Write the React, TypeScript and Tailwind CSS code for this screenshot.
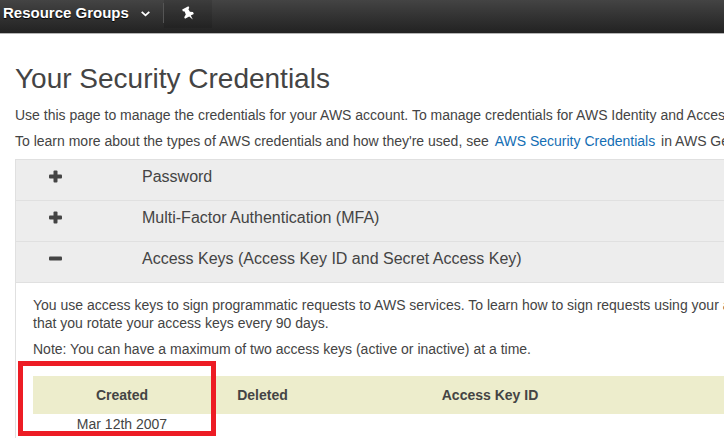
import React, { useState } from 'react';

const sections = [
  { id: 'password', title: 'Password' },
  { id: 'mfa', title: 'Multi-Factor Authentication (MFA)' },
  { id: 'access-keys', title: 'Access Keys (Access Key ID and Secret Access Key)' },
];

const accessKeys = [{ created: 'Mar 12th 2007', deleted: '', keyId: '' }];

const PinIcon = () => (
  <svg width="14" height="14" viewBox="0 0 14 14" fill="white" aria-hidden="true">
    <path d="M1.2 3.6 L7.4 0.2 L8.3 1.8 L7.4 3.2 L8.9 5.8 L12 6.1 L12.8 7.9 L9.8 9.5 L11.8 13.6 L8.2 10.5 L4 12.8 L3.2 11.2 L4.8 8.4 L3.6 5.5 L1.8 5.3 Z" />
  </svg>
);

const ToggleIcon = ({ open }: { open: boolean }) => (
  <svg width="13" height="13" viewBox="0 0 13 13" fill="#444444" aria-hidden="true">
    <rect x="0" y="4.5" width="13" height="4" rx="1" />
    {!open && <rect x="4.5" y="0.5" width="4" height="12" rx="1" />}
  </svg>
);

const NavBar = () => (
  <nav className="flex h-[34px] items-start border-b border-[#b5b5b5] bg-linear-to-b from-[#444444] to-[#222222] text-white">
    <button className="flex h-[26px] items-center gap-3 pl-[3px] pr-[13px] text-[15px] font-bold [text-shadow:0_1px_1px_#000]">
      Resource Groups
      <svg className="mt-0.5" width="9" height="6" viewBox="0 0 9 6" fill="none" stroke="white" strokeWidth="1.8" aria-hidden="true">
        <path d="M0.7 0.8 L4.5 4.3 L8.3 0.8" />
      </svg>
    </button>
    <span className="mt-[3px] h-5 w-px bg-[#555555]" />
    <button aria-label="Pin" className="flex h-7 w-12 items-center justify-center bg-black/10 pb-0.5">
      <PinIcon />
    </button>
  </nav>
);

const AccessKeysPanel = () => (
  <div className="pb-1 pl-[17px] pt-[13px]">
    <p className="leading-[18px]">
      You use access keys to sign programmatic requests to AWS services. To learn how to sign requests using your access
      <br />
      that you rotate your access keys every 90 days.
    </p>
    <p className="mt-2 leading-[18px]">
      Note: You can have a maximum of two access keys (active or inactive) at a time.
    </p>

    <div className="relative mt-[18px]">
      <table className="w-full table-fixed text-center">
        <thead>
          <tr className="h-[38px] bg-[#ededcc]">
            <th className="w-[178px]">Created</th>
            <th className="w-[103px]">Deleted</th>
            <th className="w-[352px]">Access Key ID</th>
            <th />
          </tr>
        </thead>
        <tbody>
          {accessKeys.map((key) => (
            <tr key={key.created}>
              <td>{key.created}</td>
              <td>{key.deleted}</td>
              <td>{key.keyId}</td>
              <td />
            </tr>
          ))}
        </tbody>
      </table>
      {/* Highlight around the creation date */}
      <div className="pointer-events-none absolute -left-[15px] -top-[15px] h-[75px] w-[198px] border-5 border-[#ed1c24]" />
    </div>
  </div>
);

const App = () => {
  const [openId, setOpenId] = useState('access-keys');

  return (
    <div className="min-h-screen overflow-hidden whitespace-nowrap bg-white font-['Liberation_Sans',Arial,sans-serif] text-sm text-[#444444]">
      <NavBar />

      <main className="pl-[15px] pt-[27px]">
        <h1 className="text-[28px] leading-9">Your Security Credentials</h1>
        <p className="mt-[9px] leading-[18px]">
          Use this page to manage the credentials for your AWS account. To manage credentials for AWS Identity and Access
        </p>
        <p className="mt-2 leading-[18px]">
          To learn more about the types of AWS credentials and how they're used, see{' '}
          <a href="#security-credentials" className="mx-0.5 text-[#146eb4]">AWS Security Credentials</a>{' '}
          in AWS General
        </p>

        <div className="mt-[9px] border-l border-t border-[#e0e0e0]">
          {sections.map((section) => (
            <section key={section.id}>
              <h2 className="border-b border-[#e0e0e0] bg-[#ededed]">
                <button
                  aria-expanded={openId === section.id}
                  onClick={() => setOpenId(openId === section.id ? '' : section.id)}
                  className="flex h-10 w-full items-center pb-[7px] pl-[33px] text-left text-base"
                >
                  <span className="w-[93px]">
                    <ToggleIcon open={openId === section.id} />
                  </span>
                  {section.title}
                </button>
              </h2>
              {section.id === 'access-keys' && openId === section.id && <AccessKeysPanel />}
            </section>
          ))}
        </div>
      </main>
    </div>
  );
};

export default App;
